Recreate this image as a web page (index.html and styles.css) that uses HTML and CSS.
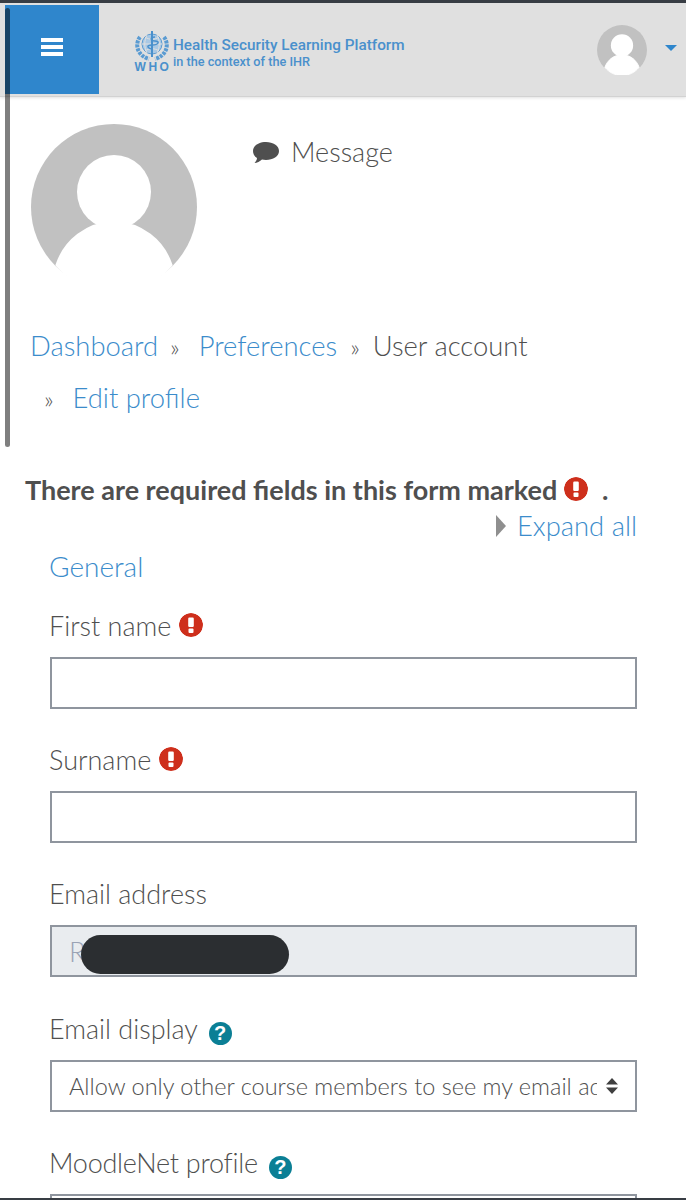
FILE: index.html
```html
<!DOCTYPE html>
<html lang="en">
<head>
  <meta charset="UTF-8">
  <meta name="viewport" content="width=device-width, initial-scale=1.0">
  <title>Edit profile</title>
  <link rel="stylesheet" href="styles.css">
</head>
<body>
  <svg class="icon-defs" width="0" height="0">
    <defs>
      <g id="person">
        <circle cx="83" cy="83" r="83" fill="#c1c1c1"/>
        <circle cx="83" cy="68" r="37" fill="#fff"/>
        <path fill="#fff" stroke="#fff" stroke-width="3" d="M26 141c8-24 30-42 57-42s49 18 57 42c-14 16-34 27-57 27s-43-11-57-27z"/>
      </g>
      <g id="req">
        <circle cx="12" cy="12" r="12" fill="#ce2f1c"/>
        <rect x="9.200" y="4.500" width="5.600" height="9.500" rx="1.200" fill="#fff"/>
        <rect x="9.500" y="15.500" width="5" height="4.500" rx="1" fill="#fff"/>
      </g>
    </defs>
  </svg>

  <div class="page">
    <div class="scrollbar"></div>

    <!-- Header -->
    <header class="navbar">
      <div class="menu-btn">
        <svg width="24" height="20" viewBox="0 0 24 20"><path fill="#fff" d="M1 1h22v4H1zM1 8h22v4H1zM1 15h22v4H1z"/></svg>
      </div>
      <div class="logo">
        <div class="who">
          <svg width="34" height="30" viewBox="0 0 34 30">
            <g fill="none" stroke="#5a9bd2">
              <circle cx="17" cy="13" r="10" fill="#a9c8e4" stroke-width="1"/>
              <path stroke-width="1" stroke="#e0e0e0" d="M7 13h20M17 3v20M10 6c4 3 10 3 14 0M10 20c4-3 10-3 14 0M12 4c-3 6-3 12 0 18M22 4c3 6 3 12 0 18"/>
              <path stroke-width="4" stroke-dasharray="3 1" d="M5 6C-1 14 3 25 14 28M29 6c6 8 2 19-9 22"/>
              <path stroke-width="2" stroke="#4a90cc" d="M17 0v26"/>
              <path stroke-width="1.500" stroke="#4a90cc" d="M20 6c-5 0-5 4 0 4s4 4-3 4-4 4 1 4"/>
            </g>
          </svg>
          <span class="who-text">WHO</span>
        </div>
        <div class="logo-text">
          <div class="logo-title">Health Security Learning Platform</div>
          <div class="logo-sub">in the context of the IHR</div>
        </div>
      </div>
      <div class="user-menu">
        <svg class="nav-avatar" viewBox="0 0 166 166"><use href="#person"/></svg>
        <span class="caret"></span>
      </div>
    </header>

    <!-- Profile -->
    <section class="profile">
      <svg class="big-avatar" viewBox="0 0 166 166"><use href="#person"/></svg>
      <a class="message">
        <svg width="27" height="23" viewBox="0 0 27 23"><path fill="#4f4f4f" d="M14 1c7 0 13 3.500 13 9s-6 9-13 9c-1.500 0-3-.2-4-.4C8 20.500 5 22 2.500 22c1.500-1.500 2.500-3.500 2.500-5C2.500 15.500 1 13 1 10 1 4.500 7 1 14 1z"/></svg>
        <span>Message</span>
      </a>
    </section>

    <!-- Breadcrumb -->
    <nav class="breadcrumb">
      <div class="crumb-row">
        <a>Dashboard</a><span class="sep sep-wide">»</span><a>Preferences</a><span class="sep">»</span><span>User account</span>
      </div>
      <div class="crumb-row">
        <span class="sep sep-first">»</span><a>Edit profile</a>
      </div>
    </nav>

    <!-- Form -->
    <p class="required-note">There are required fields in this form marked <svg class="icon-req icon-note" viewBox="0 0 24 24"><use href="#req"/></svg><span class="note-dot">.</span></p>
    <div class="expand">
      <span class="expand-arrow"></span><a>Expand all</a>
    </div>

    <form class="form">
      <a class="legend">General</a>

      <div class="field">
        <label>First name <svg class="icon-req" viewBox="0 0 24 24"><use href="#req"/></svg></label>
        <div class="input"></div>
      </div>
      <div class="field">
        <label>Surname <svg class="icon-req" viewBox="0 0 24 24"><use href="#req"/></svg></label>
        <div class="input"></div>
      </div>
      <div class="field">
        <label>Email address</label>
        <div class="input input-disabled">
          <span class="email-start">R</span>
          <span class="redaction"></span>
        </div>
      </div>
      <div class="field field-select">
        <label>Email display <span class="icon-help">?</span></label>
        <div class="input select">
          <span class="select-value">Allow only other course members to see my email address</span>
          <svg class="select-arrows" width="12" height="18" viewBox="0 0 12 18"><path fill="#3f3f3f" d="M6 1l6 6.500H0zM6 17L0 10.500h12z"/></svg>
        </div>
      </div>
      <div class="field">
        <label class="label-tight">MoodleNet profile <span class="icon-help">?</span></label>
        <div class="input"></div>
      </div>
    </form>

    <div class="bottom-line"></div>
  </div>
</body>
</html>
```

FILE: styles.css
```css
/* Basic styles */
* {
  box-sizing: border-box;
}
body {
  margin: 0;
  background: #fff;
  color: #4f4f4f;
  font-family: "Lato", "Open Sans", sans-serif;
  font-weight: 300;
  font-size: 27px;
}
a {
  color: #3b8ccb;
}
.icon-defs {
  position: absolute;
}
.page {
  position: relative;
  width: 686px;
  height: 1200px;
  overflow: hidden;
  border-top: 3px solid #383d44;
}
.scrollbar {
  position: absolute;
  z-index: 2;
  top: 5px;
  left: 5px;
  width: 5px;
  height: 439px;
  border-radius: 3px;
  background: rgba(0, 0, 0, 0.5);
}

/* Header */
.navbar {
  display: flex;
  align-items: center;
  height: 94px;
  padding: 2px 0 3px 5px;
  background: #e0e0e0;
  border-bottom: 1px solid #d2d2d2;
  box-shadow: 0 1px 3px rgba(0, 0, 0, 0.12);
}
.menu-btn {
  display: flex;
  justify-content: center;
  align-items: center;
  width: 94px;
  height: 89px;
  padding-bottom: 4px;
  background: #2f86cc;
}
.logo {
  display: flex;
  align-items: flex-start;
  gap: 4px;
  margin-left: 36px;
  margin-top: 6px;
  color: #4a90cc;
}
.who {
  display: flex;
  flex-direction: column;
  align-items: center;
  width: 34px;
}
.who-text {
  font-family: "Liberation Sans", sans-serif;
  font-size: 12px;
  font-weight: 700;
  letter-spacing: 2.500px;
  line-height: 12px;
  margin-right: -2px;
}
.logo-text {
  padding-top: 5px;
  font-family: "Roboto", sans-serif;
  font-weight: 500;
}
.logo-title {
  font-size: 15.300px;
  line-height: 18px;
  white-space: nowrap;
}
.logo-sub {
  margin-top: 1px;
  font-size: 12.700px;
  line-height: 14px;
  white-space: nowrap;
}
.user-menu {
  display: flex;
  align-items: center;
  gap: 18px;
  margin-left: auto;
  padding-right: 9px;
  padding-top: 2px;
}
.nav-avatar {
  display: block;
  width: 50px;
  height: 50px;
}
.caret {
  width: 0;
  height: 0;
  border-left: 6px solid transparent;
  border-right: 6px solid transparent;
  border-top: 6px solid #2f86cc;
  margin-bottom: 4px;
}

/* Profile */
.profile {
  display: flex;
  align-items: flex-start;
  padding: 27px 0 0 31px;
}
.big-avatar {
  display: block;
  width: 166px;
  height: 166px;
}
.message {
  display: flex;
  align-items: center;
  gap: 12px;
  margin: 11px 0 0 55px;
  color: #4f4f4f;
  line-height: 34px;
}

/* Breadcrumb */
.breadcrumb {
  margin-top: 36px;
  padding-left: 30px;
  font-size: 27.400px;
}
.crumb-row {
  display: flex;
  align-items: baseline;
  height: 52px;
  line-height: 40px;
  white-space: nowrap;
}
.sep {
  margin: 0 13px;
  font-size: 24px;
}
.sep-wide {
  margin: 0 19px 0 12px;
}
.sep-first {
  margin: 0 19px 0 14px;
}

/* Form */
.required-note {
  margin: 45px 0 0 25px;
  font-weight: 700;
  line-height: 30px;
}
.note-dot {
  margin-left: 14px;
}
.icon-req,
.icon-help {
  display: inline-flex;
  justify-content: center;
  align-items: center;
  width: 24px;
  height: 24px;
  border-radius: 50%;
  vertical-align: -1px;
}
.icon-note {
  margin-left: 0;
}
.icon-help {
  width: 23px;
  height: 23px;
  margin-left: 4px;
  background: #0b7f95;
  color: #fff;
  font-family: "Liberation Sans", sans-serif;
  font-size: 20px;
  font-weight: 700;
  line-height: 1;
  letter-spacing: 0;
}
.expand {
  display: flex;
  justify-content: flex-end;
  align-items: center;
  gap: 11px;
  margin-top: 5px;
  padding-right: 49px;
  font-size: 27.400px;
  line-height: 32px;
}
.expand-arrow {
  width: 0;
  height: 0;
  border-top: 11px solid transparent;
  border-bottom: 11px solid transparent;
  border-left: 10px solid #8f8f8f;
}
.form {
  padding: 8px 49px 0 49px;
}
.legend {
  display: block;
  font-size: 28px;
  line-height: 32px;
}
.field {
  margin-top: 28px;
}
.field + .field {
  margin-top: 0;
  padding-top: 35px;
}
.field + .field-select {
  padding-top: 36px;
}
.field label {
  display: block;
  height: 30px;
  line-height: 32px;
  margin-bottom: 17px;
}
.field .label-tight {
  letter-spacing: -0.25px;
}
.input {
  position: relative;
  display: flex;
  align-items: center;
  height: 52px;
  margin-left: 1px;
  padding: 0 17px;
  border: 2px solid #8f959e;
}
.input-disabled {
  background: #e9ecef;
}
.email-start {
  color: #9aa3b5;
}
.redaction {
  position: absolute;
  top: 8px;
  left: 29px;
  width: 208px;
  height: 39px;
  border-radius: 20px;
  background: #2b2e31;
}
.select-value {
  flex: 1;
  overflow: hidden;
  white-space: nowrap;
  font-size: 23.500px;
}
.select-arrows {
  flex: none;
  margin-left: 9px;
}
.bottom-line {
  position: absolute;
  left: 0;
  right: 0;
  bottom: 0;
  height: 2px;
  background: #383d44;
}
```
